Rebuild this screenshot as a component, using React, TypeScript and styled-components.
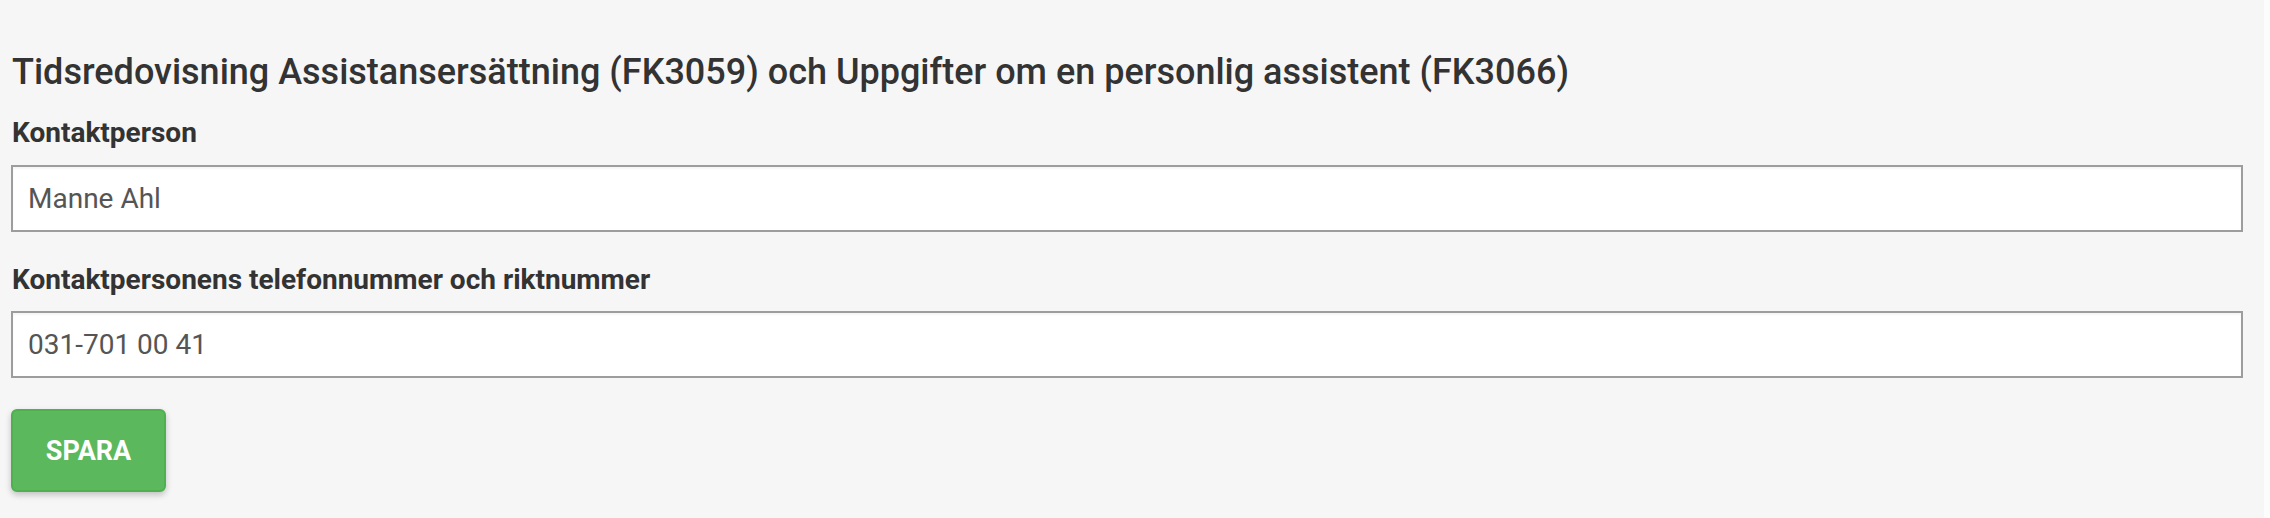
import React from "react";
import styled, { createGlobalStyle } from "styled-components";

const GlobalStyle = createGlobalStyle`
  html, body {
    margin: 0;
    padding: 0;
    background: #fcfcfc;
  }
  body {
    font-family: Roboto, "Liberation Sans", Arial, sans-serif;
  }
`;

const Page = styled.div`
  display: flex;
  min-height: 518px;
`;

const Main = styled.main`
  flex: 0 0 2264px;
  box-sizing: border-box;
  background: #f6f6f6;
  padding: 51px 21px 0 11px;
`;

const Title = styled.h2`
  margin: 0 0 22px 1px;
  font-size: 36px;
  line-height: 1.2;
  font-weight: 500;
  color: #333;
`;

const Group = styled.div<{ $first?: boolean }>`
  margin-top: ${p => (p.$first ? "0" : "31px")};
`;

const Label = styled.label`
  display: block;
  margin: 0 0 15px 1px;
  font-size: 28px;
  line-height: 1.2;
  font-weight: 700;
  color: #333;
`;

const Input = styled.input`
  display: block;
  box-sizing: border-box;
  width: 100%;
  height: 67px;
  padding: 0 15px;
  border: 2px solid #9d9d9d;
  border-radius: 0;
  background: #fff;
  box-shadow: inset 0 2px 2px rgba(0, 0, 0, 0.04);
  font-family: Roboto, "Liberation Sans", Arial, sans-serif;
  font-size: 28px;
  color: #555;
  outline: none;
`;

const SaveButton = styled.button`
  display: block;
  margin-top: 31px;
  width: 155px;
  height: 83px;
  padding: 0;
  background: #5cb85c;
  border: 2px solid #4fb04f;
  border-radius: 6px;
  box-shadow: 0 3px 6px rgba(0, 0, 0, 0.22);
  font-family: Roboto, "Liberation Sans", Arial, sans-serif;
  font-size: 27px;
  font-weight: 700;
  color: #fff;
  cursor: pointer;
`;

export default function App() {
  return (
    <>
      <GlobalStyle />
      <Page>
        <Main>
          <Title>
            Tidsredovisning Assistansersättning (FK3059) och Uppgifter om en
            personlig assistent (FK3066)
          </Title>
          <Group $first>
            <Label htmlFor="kontakt">Kontaktperson</Label>
            <Input id="kontakt" defaultValue="Manne Ahl" />
          </Group>
          <Group>
            <Label htmlFor="telefon">
              Kontaktpersonens telefonnummer och riktnummer
            </Label>
            <Input id="telefon" defaultValue="031-701 00 41" />
          </Group>
          <SaveButton type="button">SPARA</SaveButton>
        </Main>
      </Page>
    </>
  );
}
